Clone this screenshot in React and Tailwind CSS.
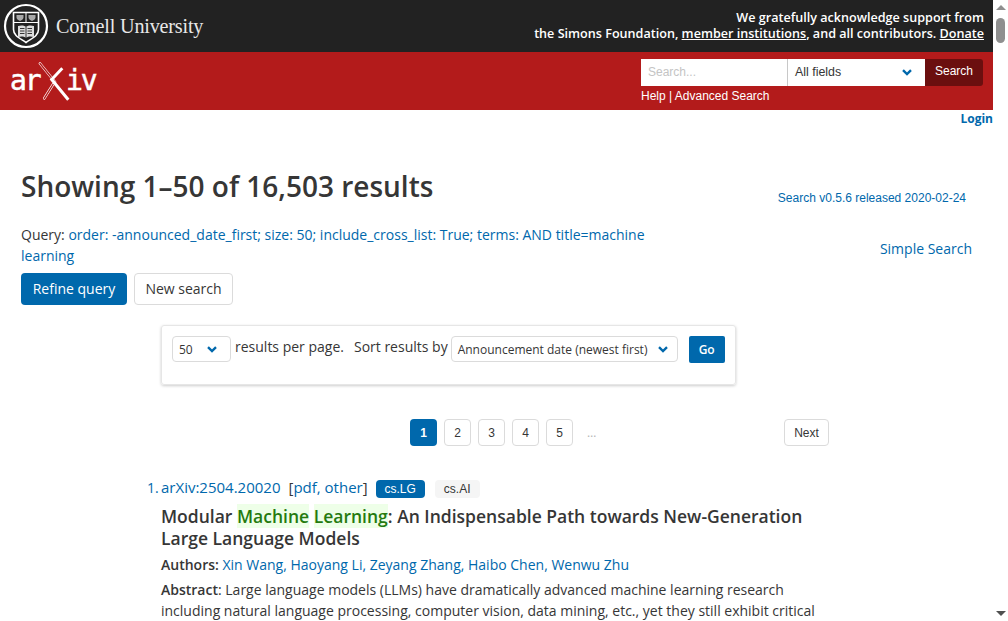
const link = 'text-[#0068ac]';

function Chevron({ className = '' }) {
  return (
    <svg viewBox="0 0 10 7" className={`w-[10px] h-[7px] ${className}`} fill="none" stroke="#0068ac" strokeWidth="2.4">
      <path d="M1 1.2l4 3.8 4-3.8" />
    </svg>
  );
}

// Cornell seal
function Seal() {
  return (
    <svg viewBox="0 0 46 46" className="w-[46px] h-[46px] shrink-0">
      <circle cx="23" cy="23" r="21" fill="none" stroke="#fff" strokeWidth="2.2" />
      <path d="M10.500 9.500h25v17c0 6-6 8.500-12.500 13-6.500-4.500-12.500-7-12.500-13z" fill="#222" stroke="#fff" strokeWidth="1.6" />
      <path d="M10.500 19.500h25M23 9.500v10" stroke="#fff" strokeWidth="1" />
      <path d="M13.500 12h7v2.500c0 1.500-1.500 2.500-3.500 3.500-2-1-3.500-2-3.500-3.500zM25.500 12h7v2.500c0 1.500-1.500 2.500-3.500 3.500-2-1-3.500-2-3.500-3.500z" fill="#aaa" />
      <path d="M15 23c3-.8 5.500-.8 8 .8 2.500-1.600 5-1.600 8-.8v11c-3-.8-5.500-.8-8 .8-2.500-1.600-5-1.600-8-.8z" fill="#ddd" />
      <path d="M23 23.500v12M17 25.500h4.500M17 28h4.500M17 30.500h4.500M24.500 25.500h4.500M24.500 28h4.500M24.500 30.500h4.500" stroke="#222" strokeWidth="0.9" />
    </svg>
  );
}

function ArxivLogo() {
  return (
    <div className="flex items-center h-[58px] pl-[10px] font-['DejaVu_Sans_Mono',monospace] text-white text-[28px] tracking-[-2px] leading-none [-webkit-text-stroke:0.5px_white]">
      <span className="w-[28px]">ar</span>
      <svg viewBox="0 0 32 39" className="w-[32px] h-[39px] shrink-0 -mr-[4px]" strokeLinecap="round">
        <path d="M2 1.500L17 20" stroke="#fff" strokeWidth="2.600" />
        <path d="M2 1.500L17 20" stroke="#b31b1b" strokeWidth="1.400" />
        <path d="M15.300 22L6.300 36.300" stroke="#fff" strokeWidth="2.600" />
        <path d="M15.300 22L6.300 36.300" stroke="#b31b1b" strokeWidth="1.400" />
        <path d="M24.300 6.300L13.700 17.500L30.300 37.700" fill="none" stroke="#fff" strokeWidth="3" strokeLinecap="butt" />
      </svg>
      <span>iv</span>
    </div>
  );
}

function PageButton({ children, active }) {
  return (
    <span
      className={`flex items-center justify-center w-[27px] h-[27px] rounded-[4px] text-[12px] font-['Liberation_Sans',sans-serif] ${
        active ? 'bg-[#0068ac] text-white font-bold' : 'border border-[#dbdbdb] text-[#363636]'
      }`}
    >
      {children}
    </span>
  );
}

function Scrollbar() {
  return (
    <div className="w-[15px] h-full bg-white flex flex-col items-center justify-between shrink-0 py-[5px]">
      <div className="flex flex-col items-center">
        <div className="w-0 h-0 border-x-[5px] border-x-transparent border-b-[5px] border-b-[#8f8f8f]" />
        <div className="w-[9px] h-[25px] rounded-[5px] bg-[#8f8f8f] mt-[8px]" />
      </div>
      <div className="w-0 h-0 border-x-[5px] border-x-transparent border-t-[5px] border-t-[#505050]" />
    </div>
  );
}

export default function App() {
  return (
    <div className="flex h-[621px] overflow-hidden bg-white text-[#363636] font-['Open_Sans',sans-serif]">
      <div className="flex-1 min-w-0">
        {/* Cornell bar */}
        <div className="h-[52px] bg-[#222] flex items-center justify-between pl-[3px] pr-[9px]">
          <div className="flex items-center gap-[7px]">
            <Seal />
            <span className="font-['Liberation_Serif',serif] text-[#e8e8e8] text-[20.2px] tracking-[-0.2px]">Cornell University</span>
          </div>
          <div className="text-right text-white text-[12.6px] leading-[16px] font-semibold pb-[1px]">
            <div>We gratefully acknowledge support from</div>
            <div>
              the Simons Foundation, <span className="underline">member institutions</span>, and all contributors.{' '}
              <span className="underline">Donate</span>
            </div>
          </div>
        </div>

        {/* arXiv bar */}
        <div className="h-[58px] bg-[#b31b1b] flex justify-between pr-[10px]">
          <ArxivLogo />
          <div className="pt-[7px] font-['Liberation_Sans',sans-serif]">
            <div className="flex h-[27px] text-[12px]">
              <div className="w-[147px] bg-white text-[#c4c4c4] pl-[7px] pb-[2px] flex items-center border-r border-[#c8c8c8]">Search...</div>
              <div className="w-[137px] bg-white text-[#363636] pl-[7px] pr-[13px] pb-[1px] flex items-center justify-between text-[12.4px]">
                All fields
                <Chevron />
              </div>
              <div className="w-[58px] bg-[#6b0f0f] text-white rounded-r-[3px] flex items-start justify-center pt-[3px]">Search</div>
            </div>
            <div className="text-white text-[12px] leading-[14px] mt-[3px]">Help | Advanced Search</div>
          </div>
        </div>

        {/* Login */}
        <div className={`text-right text-[12px] leading-[16px] font-bold ${link}`}>
          <span className="relative top-[1px]">Login</span>
        </div>

        <main className="px-[21px]">
          <div className="flex justify-between mt-[40px] pr-[6px]">
            <h1 className="text-[28px] leading-[40px] font-semibold">Showing 1–50 of 16,503 results</h1>
            <span className={`text-[12px] font-['Liberation_Sans',sans-serif] mt-[23px] ${link}`}>Search v0.5.6 released 2020-02-24</span>
          </div>

          <div className="flex justify-between mt-[17px]">
            <p className="w-[640px] text-[14px] leading-[21px]">
              Query: <span className={link}>order: -announced_date_first; size: 50; include_cross_list: True; terms: AND title=machine learning</span>
            </p>
            <span className={`text-[14px] leading-[21px] mt-[14px] ${link}`}>Simple Search</span>
          </div>

          <div className="flex gap-[7px] mt-[7px]">
            <span className="h-[32px] w-[106px] pb-[1px] flex items-center justify-center rounded-[4px] bg-[#0068ac] text-white text-[14px]">Refine query</span>
            <span className="h-[32px] w-[99px] pb-[1px] flex items-center justify-center rounded-[4px] border border-[#dbdbdb] text-[14px]">New search</span>
          </div>

          {/* Sort panel */}
          <div className="ml-[140px] mt-[20px] w-[575px] h-[60px] rounded-[3px] border border-[#e6e6e6] shadow-[0_1px_3px_rgba(0,0,0,0.2)] pt-[10px] pl-[10px] flex items-start text-[14px]">
            <div className="w-[59px] h-[26px] border border-[#dbdbdb] rounded-[4px] text-[12px] pl-[6px] pr-[13px] pt-[1px] flex items-center justify-between">
              50
              <Chevron />
            </div>
            <span className="ml-[4px] leading-[22px]">results per page.</span>
            <span className="ml-[10px] leading-[22px]">Sort results by</span>
            <div className="ml-[3px] w-[227px] h-[26px] border border-[#dbdbdb] rounded-[4px] text-[12px] pl-[6px] pr-[9px] pt-[1px] flex items-center justify-between">
              Announcement date (newest first)
              <Chevron />
            </div>
            <span className="ml-[11px] w-[36px] h-[27px] bg-[#0068ac] rounded-[2px] text-white text-[12px] font-semibold flex items-center justify-center">Go</span>
          </div>

          {/* Pagination */}
          <div className="flex items-center mt-[34px] ml-[389px] w-[419px]">
            <div className="flex gap-[7px]">
              <PageButton active>1</PageButton>
              <PageButton>2</PageButton>
              <PageButton>3</PageButton>
              <PageButton>4</PageButton>
              <PageButton>5</PageButton>
            </div>
            <span className="ml-[14px] text-[12px] text-[#b5b5b5]">…</span>
            <span className="ml-auto h-[27px] w-[45px] rounded-[4px] border border-[#dbdbdb] text-[12px] font-['Liberation_Sans',sans-serif] flex items-center justify-center">Next</span>
          </div>

          {/* Result */}
          <div className="flex mt-[31px] ml-[126px] w-[683px]">
            <span className={`w-[14px] shrink-0 text-[14px] leading-[21px] ${link}`}>1.</span>
            <div className="flex-1 min-w-0">
              <div className={`flex items-start text-[15px] leading-[21px] font-medium ${link}`}>
                <span>arXiv:2504.20020</span>
                <span className="ml-[8px]">
                  <span className="text-[#363636]">[</span>pdf, other<span className="text-[#363636]">]</span>
                </span>
                <span className="ml-[8px] mt-[3px] h-[18px] w-[49px] rounded-[4px] bg-[#0068ac] text-white text-[12px] font-normal font-['Liberation_Sans',sans-serif] flex items-center justify-center">cs.LG</span>
                <span className="ml-[10px] mt-[3px] h-[18px] w-[45px] rounded-[4px] bg-[#f5f5f5] text-[#363636] text-[12px] font-normal font-['Liberation_Sans',sans-serif] flex items-center justify-center">cs.AI</span>
              </div>
              <h2 className="mt-[7px] text-[17.5px] leading-[22px] font-semibold">
                Modular <span className="bg-[#eeffe8] text-[#257a0f]">Machine</span> <span className="bg-[#eeffe8] text-[#257a0f]">Learning</span>: An Indispensable Path towards New-Generation Large Language Models
              </h2>
              <p className="mt-[5px] text-[14px] leading-[21px]">
                <span className="font-semibold">Authors:</span>{' '}
                <span className={link}>Xin Wang, Haoyang Li, Zeyang Zhang, Haibo Chen, Wenwu Zhu</span>
              </p>
              <p className="mt-[4px] text-[14px] leading-[21px]">
                <span className="font-semibold">Abstract</span>: Large language models (LLMs) have dramatically advanced machine learning research including natural language processing, computer vision, data mining, etc., yet they still exhibit critical
              </p>
            </div>
          </div>
        </main>
      </div>
      <Scrollbar />
    </div>
  );
}
